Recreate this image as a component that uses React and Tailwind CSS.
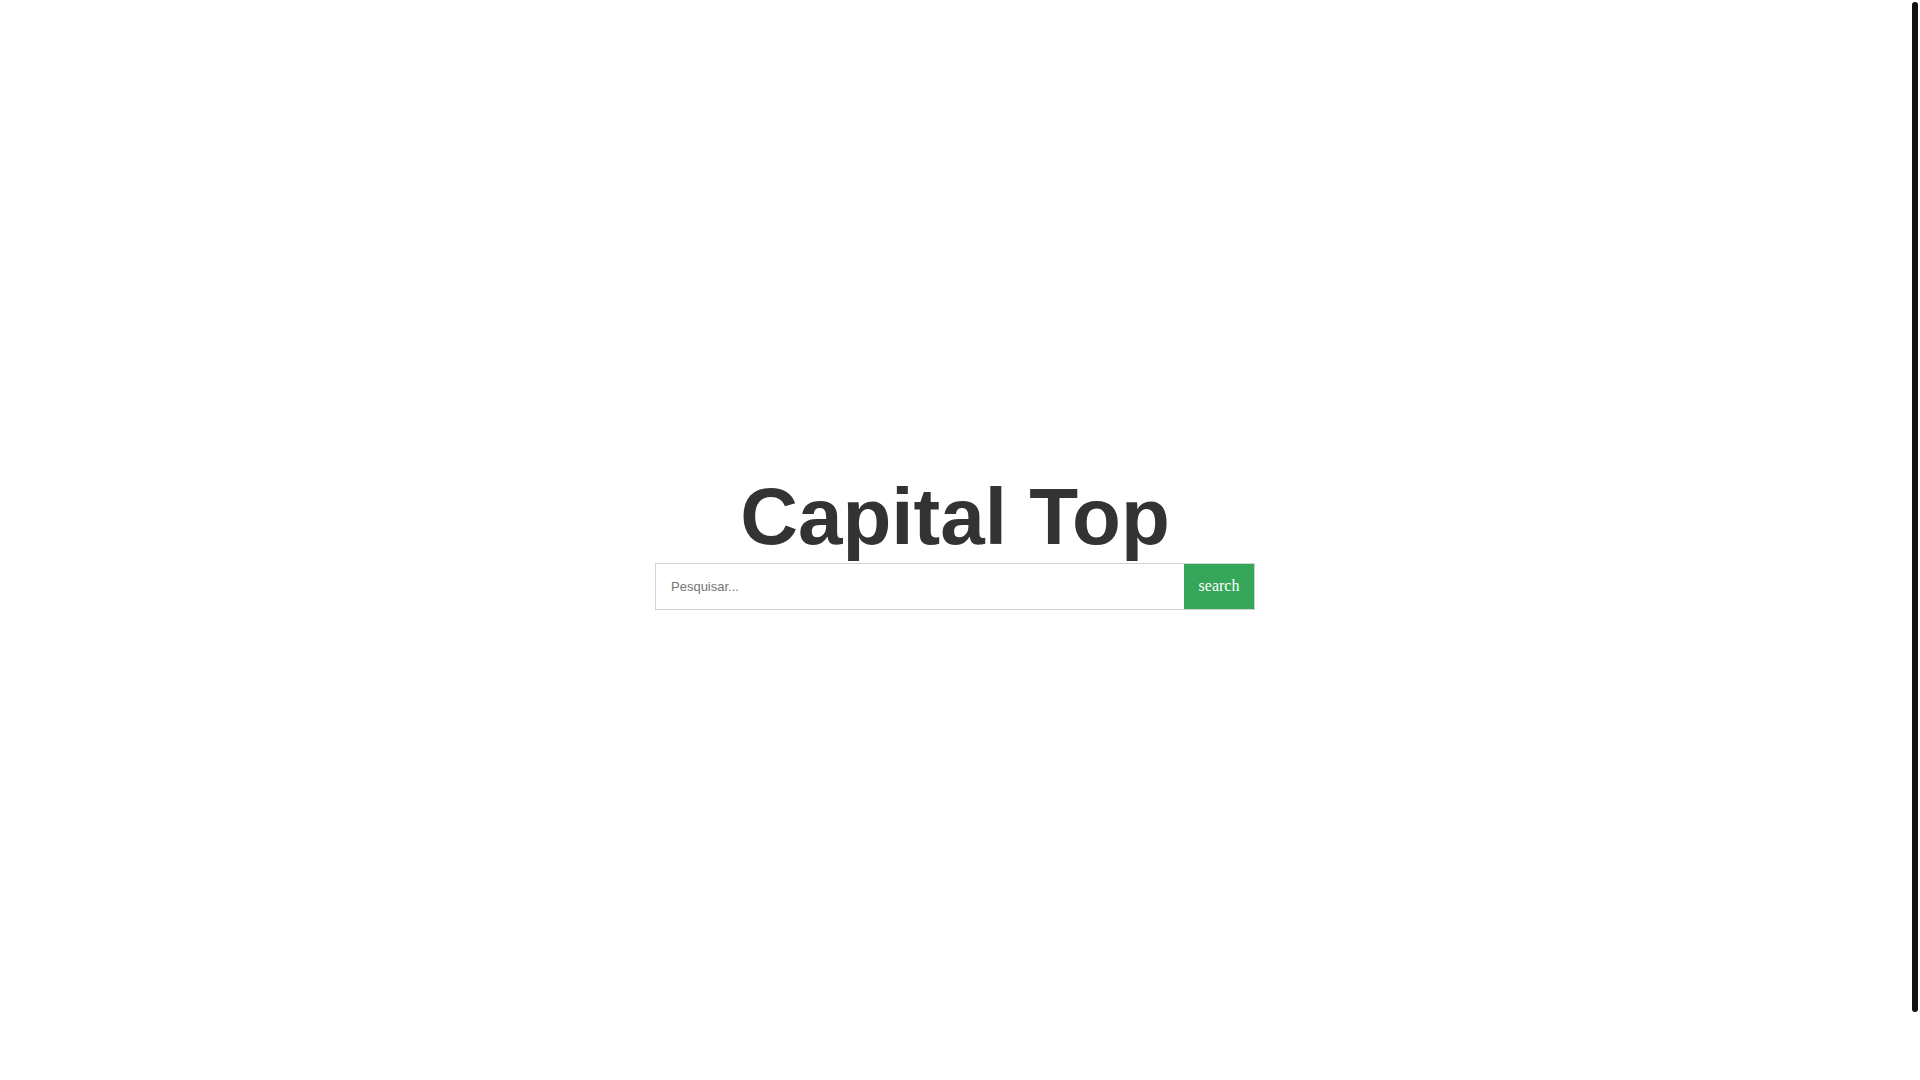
export default function App() {
  return (
    <div className="flex h-screen w-full bg-white">
      <main className="flex flex-1 flex-col items-center justify-center">
        <h1 className="m-0 text-[80px] font-bold leading-[normal] text-[#333] font-['Liberation_Sans',Arial,sans-serif]">
          Capital Top
        </h1>
        <form
          className="flex h-[47px] w-[600px] border border-[#d3d3d3] bg-white"
          onSubmit={(e) => e.preventDefault()}
        >
          <input
            type="text"
            placeholder="Pesquisar..."
            className="h-full flex-1 bg-transparent px-[15px] text-[13px] text-[#333] outline-none placeholder:text-[#757575] font-['Liberation_Sans',Arial,sans-serif]"
          />
          <button
            type="submit"
            className="h-full w-[70px] bg-[#35a65a] text-[16px] text-white font-['Liberation_Serif','Times_New_Roman',serif]"
          >
            search
          </button>
        </form>
      </main>
      <div className="w-[10px] shrink-0">
        <div className="ml-[2px] mt-[2px] h-[1010px] w-[6px] rounded-full bg-[#111]" />
      </div>
    </div>
  );
}
